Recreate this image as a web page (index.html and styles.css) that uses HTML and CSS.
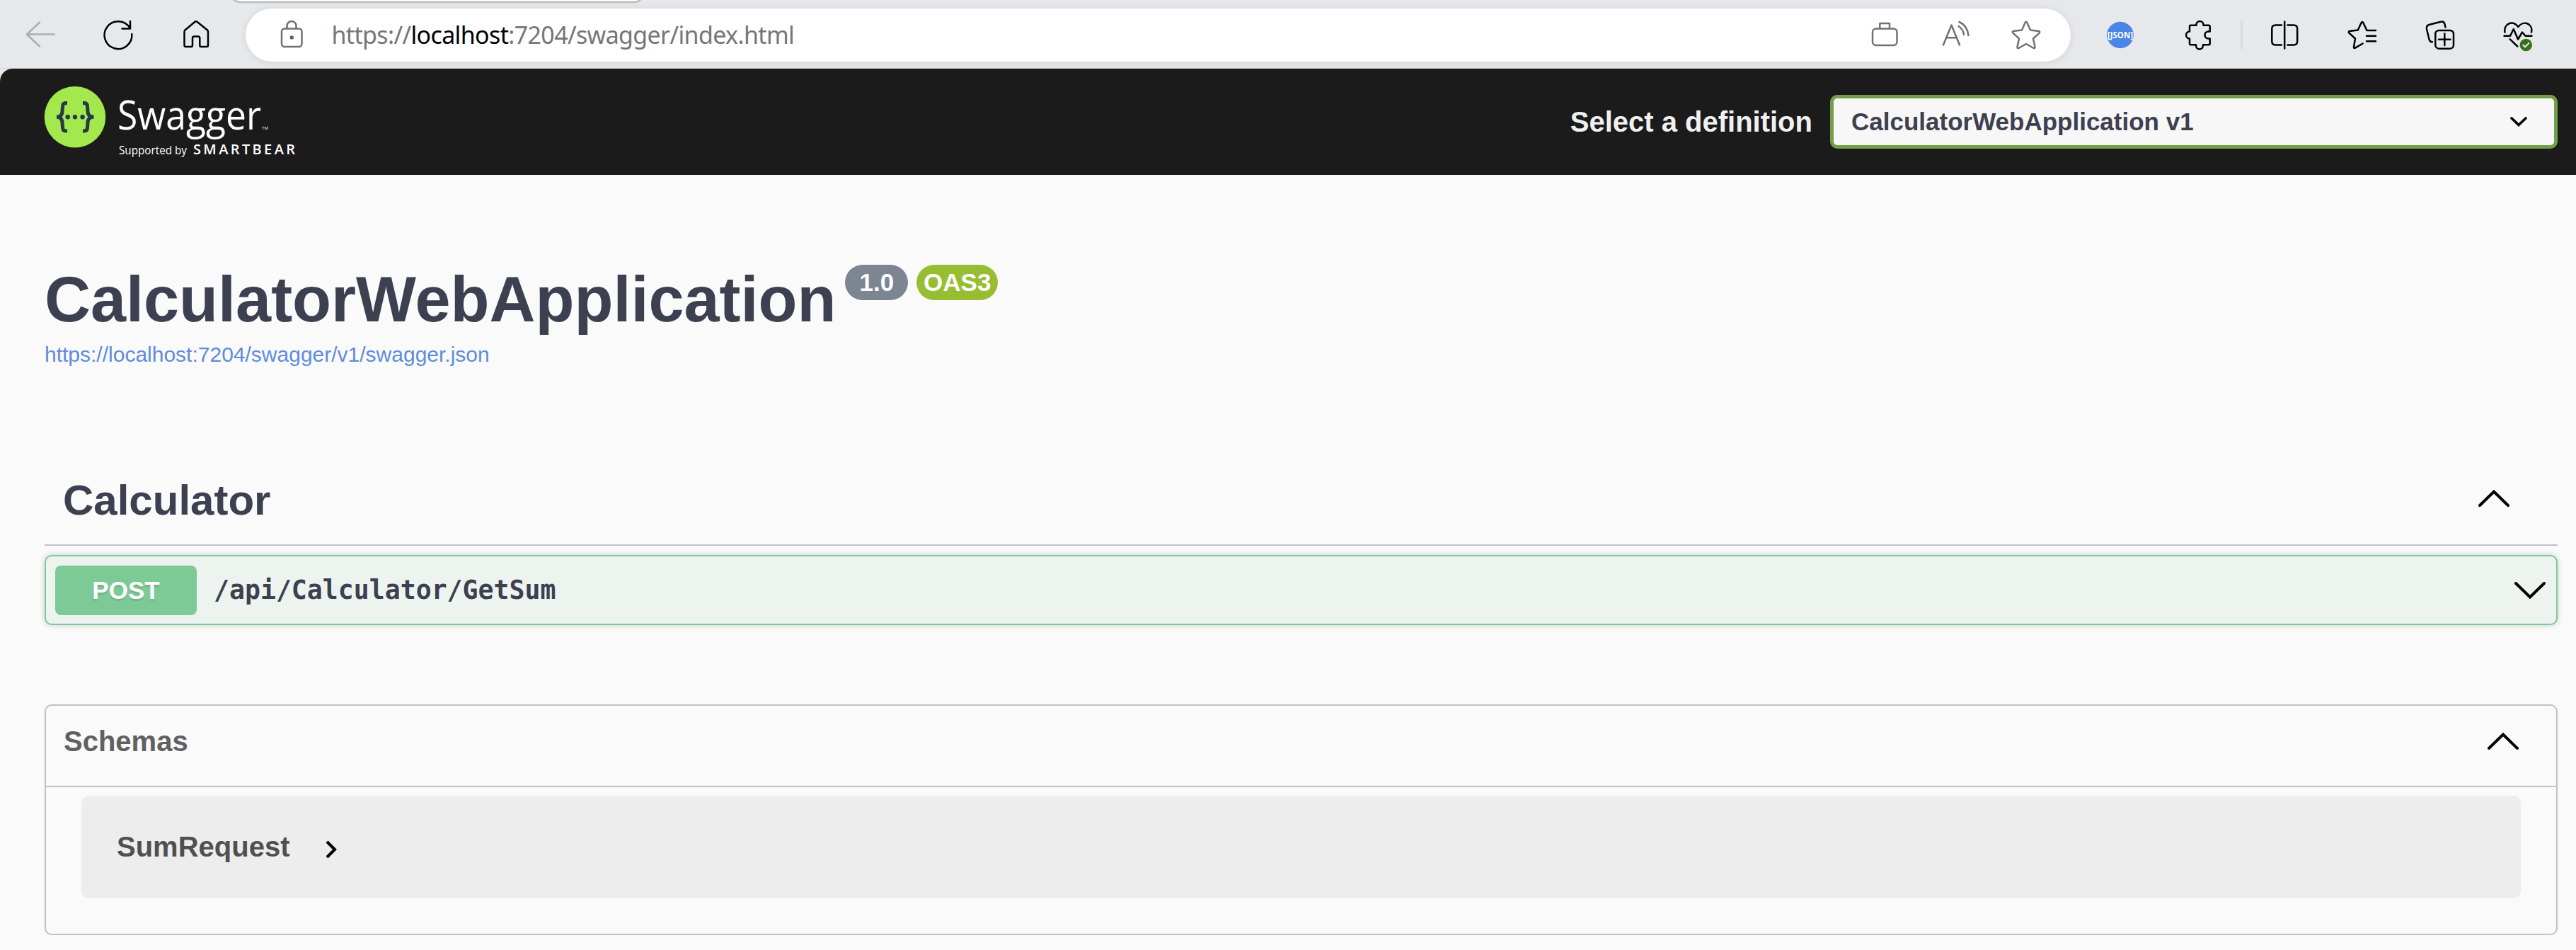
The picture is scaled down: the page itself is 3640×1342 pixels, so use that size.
FILE: index.html
```html
<!DOCTYPE html>
<html lang="en">
<head>
<meta charset="utf-8">
<title>Swagger UI</title>
<link rel="stylesheet" href="styles.css">
</head>
<body>
<div class="toolbar">
  <div class="tab-edge"></div>
  <nav class="nav">
    <svg class="icon muted" viewBox="0 0 48 48"><path d="M5 23.5H43.5M23 6.500L5 23.500 23 40.500"/></svg>
    <svg class="icon" viewBox="0 0 48 48"><path d="M43.300 23A19.400 19.400 0 1 1 40.500 14.500M41 5V15.500H29.500"/></svg>
    <svg class="icon" viewBox="0 0 48 48"><path d="M22.500 5.800Q24 4.600 25.500 5.800L40 17.500Q41 18.500 41 20V39Q41 41 39 41H31Q29.300 41 29.300 39V29Q29.300 26.500 27 26.500H21.500Q19 26.500 19 29V39Q19 41 17.300 41H9.500Q7.500 41 7.500 39V20Q7.500 18.500 8.500 17.500Z"/></svg>
  </nav>
  <div class="address">
    <svg class="icon gray" viewBox="0 0 48 48"><rect x="10" y="15.500" width="28.500" height="25.500" rx="4"/><path d="M17.500 15V11.500a6.500 6.500 0 0 1 13 0V15"/><circle class="dot" cx="24.300" cy="28" r="2.800"/></svg>
    <span class="url">https://<b>localhost</b>:7204/swagger/index.html</span>
    <div class="address-actions">
      <svg class="icon gray" viewBox="0 0 48 48"><rect x="7" y="15.500" width="34.500" height="23.500" rx="5"/><path d="M17.300 15V8H31V15"/></svg>
      <svg class="icon gray" viewBox="0 0 48 48"><path d="M7 38.500L18.500 10.500 30 38.500M11 28.300H26M28.500 12Q35 16 36 24M29.500 6Q41 11 42.500 25"/></svg>
      <svg class="icon gray" viewBox="0 0 48 48"><path d="M22.700 6.700Q24 5 25.300 6.700L30 17.500 42 19Q44 19.700 42.800 21.300L34 29.500 36.500 41.500Q36.500 43.500 34.500 43L24 37 13.500 43Q11.500 43.500 11.500 41.500L14 29.500 5.200 21.300Q4 19.700 6 19L18 17.500Z"/></svg>
    </div>
  </div>
  <div class="extensions">
    <svg class="icon" viewBox="0 0 48 48"><circle class="json-disc" cx="24" cy="24.500" r="18.800"/><text class="json-text" x="6" y="28.500" textLength="36" lengthAdjust="spacingAndGlyphs">[JSON]</text></svg>
    <svg class="icon" viewBox="0 0 48 48"><path d="M13.500 10.800H21.500V10a5 5 0 0 1 10 0V10.800H39Q40.700 10.800 40.700 12.500V19.500H38.500a5 5 0 0 0 0 10H40.700V36.500Q40.700 38.200 39 38.200H31V39.500a5 5 0 0 1-10 0V38.200H13.500Q12 38.200 12 36.500V29.500a4.900 5 0 0 1 0-10V12.500Q12 10.800 13.500 10.800Z"/></svg>
  </div>
  <div class="separator"></div>
  <div class="extensions">
    <svg class="icon" viewBox="0 0 48 48"><path d="M20 10.500H11.500Q6.300 10.500 6.300 15.500V33.500Q6.300 38.500 11.500 38.500H20M28.500 10.500H37Q42.200 10.500 42.200 15.500V33.500Q42.200 38.500 37 38.500H28.500M24.200 5.500V43.500"/></svg>
    <svg class="icon" viewBox="0 0 48 48"><path d="M43 18H30.500L25.300 7Q24 5 22.700 7L17.800 17.500 6 19Q4 19.700 5.200 21.300L14 29.500 12 41.500Q12 43.700 14 42.700L24.600 36.500M30 25.800H43M30 33.300H43"/></svg>
    <svg class="icon" viewBox="0 0 48 48"><rect x="17.300" y="18" width="25.700" height="25.700" rx="5"/><path d="M30.300 22.500V39M22 30.700H38.500M31.500 13.500L30.500 9Q29.300 4.700 25 5.700L9 9.700Q4 11 5 16L8.500 30.500Q9.500 34.800 13 34.300"/></svg>
    <svg class="icon" viewBox="0 0 48 48"><path d="M5.500 20.500C3.500 9 16 2.500 24.300 13C32.500 2.500 45.500 9 43 20.500M4.500 25.700H13L17.800 16 24 30.500 30 20.500 34.500 25.700H43.500M12.700 30.300L23.300 40.500"/><circle class="ok-disc" cx="35.300" cy="38.500" r="8.700"/><path class="ok-check" d="M31.300 38.700L34 41.300 39.500 35.800"/></svg>
  </div>
</div>

<header class="topbar">
  <svg class="logo" viewBox="0 0 360 104">
    <circle class="logo-disc" cx="43" cy="43.200" r="43.300"/>
    <path class="logo-brace" d="M32 23.500H30Q25.500 23.500 25.500 28.500L25 36Q24.500 43.200 17 43.200Q24.500 43.200 25 50.500L25.500 58Q25.500 63 30 63H32M54 23.500H56Q60.500 23.500 60.500 28.500L61 36Q61.500 43.200 69.500 43.200Q61.500 43.200 61 50.500L60.500 58Q60.500 63 56 63H54"/>
    <g class="logo-dots"><circle cx="32.700" cy="43.200" r="3.200"/><circle cx="43" cy="43.200" r="3.200"/><circle cx="53.600" cy="43.200" r="3.200"/></g>
    <text class="logo-name" x="103" y="61" textLength="203" lengthAdjust="spacingAndGlyphs">Swagger</text>
    <text class="logo-tm" x="307" y="61" textLength="9" lengthAdjust="spacingAndGlyphs">TM</text>
    <text class="logo-by" x="105" y="96" textLength="96" lengthAdjust="spacingAndGlyphs">Supported by</text>
    <text class="logo-brand" x="210" y="96" textLength="144">SMARTBEAR</text>
  </svg>
  <div class="definition">
    <span class="definition-label">Select a definition</span>
    <div class="select">
      <span>CalculatorWebApplication v1</span>
      <svg class="select-arrow" viewBox="0 0 24 14"><path d="M2 2L12 11.500 22 2"/></svg>
    </div>
  </div>
</header>

<main class="page">
  <div class="title-row">
    <h1 class="title">CalculatorWebApplication</h1>
    <span class="badge">1.0</span>
    <span class="badge oas">OAS3</span>
  </div>
  <a class="spec-link">https://localhost:7204/swagger/v1/swagger.json</a>

  <section>
    <div class="tag">
      <h2 class="tag-name">Calculator</h2>
      <svg class="chevron" viewBox="0 0 44 24"><path d="M2 22L22 2.500 42 22"/></svg>
    </div>
    <div class="operation">
      <span class="method">POST</span>
      <span class="path">/api/Calculator/GetSum</span>
      <svg class="chevron" viewBox="0 0 44 24"><path d="M2 2L22 21.500 42 2"/></svg>
    </div>
  </section>

  <section class="schemas">
    <div class="schemas-head">
      <h3 class="schemas-title">Schemas</h3>
      <svg class="chevron" viewBox="0 0 44 24"><path d="M2 22L22 2.500 42 22"/></svg>
    </div>
    <div class="model">
      <span>SumRequest</span>
      <svg class="model-arrow" viewBox="0 0 16 26"><path d="M2 2L13 13 2 24"/></svg>
    </div>
  </section>
</main>
</body>
</html>
```

FILE: styles.css
```css
* { box-sizing: border-box; }
body {
  margin: 0;
  background: #fafafa;
  color: #3d4050;
  font-family: "Liberation Sans", Arial, sans-serif;
}
h1, h2, h3 { margin: 0; font-weight: 700; }

/* Browser toolbar */
.toolbar {
  position: relative;
  display: flex;
  align-items: center;
  height: 97px;
  padding: 2px 58px 0 33px;
  background: #e6e8ec;
  border-bottom: 1px solid #d6d7db;
}
.tab-edge {
  position: absolute;
  left: 326px;
  top: -18px;
  width: 584px;
  height: 20px;
  border-radius: 0 0 14px 14px;
  background: #fff;
  box-shadow: 0 1px 3px rgba(0, 0, 0, .45);
}
.icon {
  display: block;
  flex: none;
  width: 48px;
  height: 48px;
  fill: none;
  stroke: #000;
  stroke-width: 2.5;
  stroke-linecap: round;
  stroke-linejoin: round;
}
.icon.muted { stroke: #adadad; }
.icon.gray { stroke: #717171; }
.dot { fill: #666; stroke: none; }
.nav, .extensions { display: flex; gap: 62px; }
.address {
  display: flex;
  flex: 1;
  align-items: center;
  height: 75px;
  margin: 0 46px;
  padding: 0 39px 0 41px;
  border-radius: 38px;
  background: #fff;
  box-shadow: 0 1px 12px rgba(0, 0, 0, .09);
}
.url {
  margin-left: 32.5px;
  color: #767676;
  font: 34px/48px "Noto Sans", "Open Sans", sans-serif;
  letter-spacing: -0.65px;
  white-space: nowrap;
}
.url b { color: #000; font-weight: 400; }
.address-actions { display: flex; gap: 52px; margin-left: auto; }
.separator { width: 3px; height: 40px; margin: 0 35px 0 36px; background: #d8dade; }
.json-disc { fill: #4b86e6; stroke: none; }
.json-text { fill: #fff; stroke: none; font: 700 13px "Open Sans", sans-serif; }
.ok-disc { fill: #38731a; stroke: none; }
.ok-check { stroke: #fff; stroke-width: 1.8; }

/* Swagger top bar */
.topbar {
  display: flex;
  align-items: center;
  justify-content: space-between;
  height: 150px;
  padding: 0 26px 0 63px;
  border-radius: 18px 0 0 0;
  background: #1b1b1b;
  box-shadow: -18px -18px 0 #e6e8ec;
  clip-path: inset(0);
}
.logo { width: 360px; height: 104px; margin-top: 4px; overflow: visible; }
.logo-disc { fill: #a3e84c; }
.logo-brace { fill: none; stroke: #26384a; stroke-width: 5; }
.logo-dots { fill: #26384a; }
.logo-name { fill: #fff; font: 400 56px "Open Sans", sans-serif; }
.logo-tm { fill: #fff; font: 400 6px "Open Sans", sans-serif; }
.logo-by { fill: #fff; font: 400 16px "Open Sans", sans-serif; }
.logo-brand { fill: #fff; font: 600 20px "Open Sans", sans-serif; }
.definition { display: flex; align-items: center; }
.definition-label { color: #f0f0f0; font-size: 40px; font-weight: 700; line-height: 50px; margin-right: 25px; }
.select {
  display: flex;
  align-items: center;
  justify-content: space-between;
  width: 1028px;
  height: 76px;
  padding: 0 38px 0 25px;
  border: 5px solid #749f48;
  border-radius: 10px;
  background: #f7f7f7;
  font-size: 35px;
  font-weight: 700;
}
.select-arrow { width: 24px; height: 14px; fill: none; stroke: #000; stroke-width: 3.6; stroke-linecap: round; }

/* Page content */
.page { padding: 126px 26px 0 63px; }
.title-row { display: flex; align-items: flex-start; height: 100px; }
.title { font-size: 90px; line-height: 100px; }
.badge {
  height: 50px;
  margin: 1px 0 0 13px;
  padding: 0 20px;
  border-radius: 25px;
  background: #7d8492;
  color: #fff;
  font-size: 35px;
  font-weight: 700;
  line-height: 50px;
}
.badge.oas { margin-left: 12px; padding: 0 10px; background: #97be32; }
.spec-link { display: block; margin-top: 8px; color: #5f8cdc; font-size: 30px; line-height: 40px; }
.tag {
  display: flex;
  align-items: center;
  justify-content: space-between;
  height: 127px;
  margin-top: 123px;
  padding: 0 68px 0 26px;
  border-bottom: 2px solid #c0c1c9;
}
.tag-name { font-size: 60px; line-height: 70px; }
.chevron { width: 44px; height: 24px; fill: none; stroke: #000; stroke-width: 4; stroke-linecap: round; }
.tag .chevron { margin-bottom: 5px; }
.operation {
  display: flex;
  align-items: center;
  height: 99px;
  margin-top: 13px;
  padding: 0 15px 0 13px;
  border: 2px solid #7bcb96;
  border-radius: 10px;
  background: #edf4f0;
  box-shadow: 0 0 8px rgba(0, 0, 0, .19);
}
.method {
  width: 200px;
  height: 70px;
  border-radius: 8px;
  background: #7dca97;
  color: #fff;
  font-size: 35px;
  font-weight: 700;
  line-height: 69px;
  text-align: center;
  text-shadow: 0 3px 0 rgba(0, 0, 0, .1);
}
.path { margin: 1px 0 0 24px; font: 700 36.5px/50px "DejaVu Sans Mono", monospace; }
.operation .chevron { margin-left: auto; }
.schemas { height: 326px; margin-top: 112px; border: 2px solid #c1c1c7; border-radius: 10px; }
.schemas-head {
  display: flex;
  align-items: center;
  justify-content: space-between;
  height: 115px;
  padding: 0 53px 13px 25px;
  border-bottom: 2px solid #c1c1c7;
}
.schemas-title { color: #606060; font-size: 40px; line-height: 50px; }
.model {
  display: flex;
  align-items: center;
  height: 145px;
  margin: 12px 50px 0;
  padding-left: 50px;
  border-radius: 10px;
  background: #ededed;
  color: #505050;
  font-size: 40px;
  font-weight: 700;
}
.model-arrow { width: 16px; height: 26px; margin: 7px 0 0 50px; fill: none; stroke: #000; stroke-width: 4.2; }
```
